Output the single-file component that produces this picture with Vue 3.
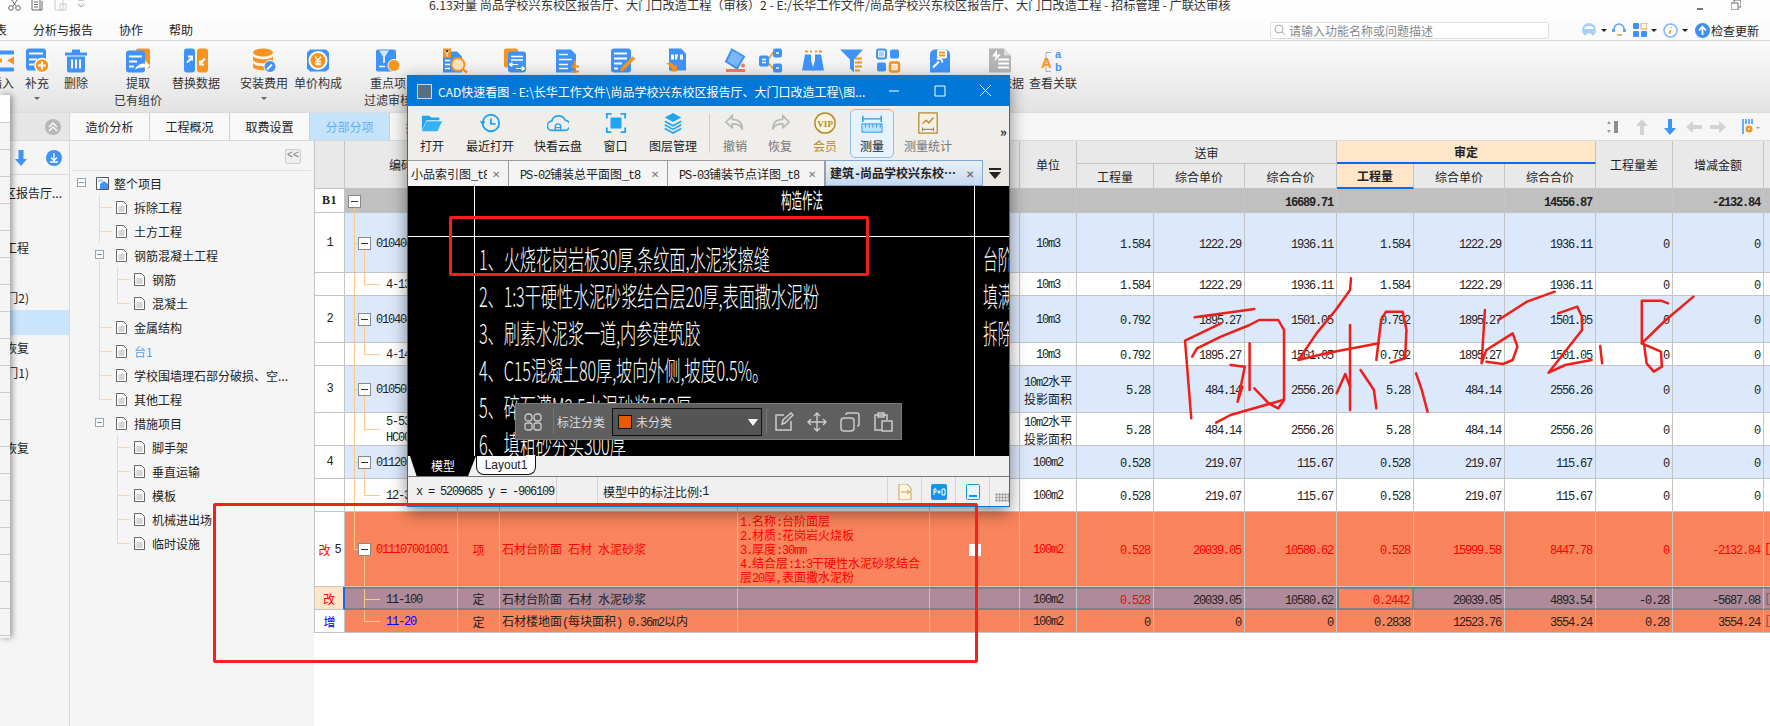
<script setup>
const B = '#3f93f7', O = '#f7941d', W = '#fff', G = '#b4b4b4'
const icons = {
  insert: `<rect x="0" y="2" width="24" height="4" rx="1" fill="${B}"/><rect x="0" y="10" width="12" height="4" fill="${O}"/><path d="M24 8v8l-7-4z" fill="${O}"/><rect x="0" y="19" width="24" height="4" rx="1" fill="${B}"/>`,
  add: `<rect x="1" y="0" width="20" height="22" rx="3" fill="${B}"/><path d="M4 5h14M4 11h8M4 16h5" stroke="${W}" stroke-width="2"/><circle cx="17" cy="17" r="7" fill="${O}" stroke="${W}" stroke-width="1.5"/><path d="M17 13v8M13 17h8" stroke="${W}" stroke-width="2"/>`,
  del: `<path d="M1 4h22v3H1zM8 1h8v3H8z" fill="${B}"/><path d="M3 8h18v14a2 2 0 0 1-2 2H5a2 2 0 0 1-2-2z" fill="${B}"/><path d="M8 11v9M12 11v9M16 11v9" stroke="${W}" stroke-width="2"/>`,
  pick: `<rect x="10" y="0" width="14" height="20" rx="2" fill="${O}"/><rect x="0" y="2" width="19" height="22" rx="3" fill="${B}"/><path d="M3 8h13M3 13h8M3 18h5" stroke="${W}" stroke-width="2"/><path d="M9 21c2-5 6-6 10-6v-3l5 5-5 5v-3c-4 0-6 0-10 2z" fill="${W}"/>`,
  swap: `<rect x="0" y="0" width="11" height="24" rx="3" fill="${B}"/><rect x="13" y="0" width="11" height="24" rx="3" fill="${O}"/><path d="M3 14l5-5M4 8h4v4M21 10l-5 5M20 16h-4v-4" stroke="${W}" stroke-width="2" fill="none"/>`,
  db: `<ellipse cx="11" cy="4" rx="10" ry="4" fill="${O}"/><path d="M1 7c0 5 20 5 20 0v4c0 5-20 5-20 0zM1 14c0 5 20 5 20 0v4c0 5-20 5-20 0z" fill="${O}"/><circle cx="18" cy="18" r="6" fill="${B}" stroke="${W}"/><path d="M15 21l5-5" stroke="${W}" stroke-width="2"/>`,
  unit: `<path d="M4 1h16l3 3v16l-3 3H4l-3-3V4z" fill="${B}"/><circle cx="12" cy="12" r="8.5" fill="${O}" stroke="${W}" stroke-width="2"/><path d="M9 8l3 4 3-4M12 12v5M9 13h6M9 15.500h6" stroke="${W}" stroke-width="1.300" fill="none"/>`,
  key: `<rect x="0" y="1" width="20" height="22" rx="2" fill="${B}"/><path d="M3 2h10l-4 6v6l-2 1V8z" fill="${W}" opacity=".8"/><circle cx="18" cy="17" r="6" fill="${O}" stroke="${W}"/><path d="M3 18h6" stroke="${W}" stroke-width="1.500"/>`,
  s1: `<path d="M0 3h14l5 5v16H0z" fill="${B}"/><rect x="0" y="0" width="8" height="9" fill="${O}"/><path d="M2 2l2 3 2-3M4 5v3" stroke="${W}"/><path d="M2 12h5M2 16h5M2 20h5" stroke="${W}" stroke-width="1.500"/><circle cx="15" cy="16" r="6.500" fill="#ffe2c2" stroke="${O}" stroke-width="2"/><path d="M20 21l4 3" stroke="${O}" stroke-width="2.500"/>`,
  s2: `<rect x="0" y="0" width="14" height="19" rx="2" fill="${O}"/><rect x="4" y="3" width="18" height="21" rx="3" fill="${B}"/><path d="M7 8h12M7 11.500h12" stroke="${W}" stroke-width="1.500"/><path d="M5 16l3-2v4zM8 16h6M21 20l-3-2v4zM18 20h-6" fill="${W}" stroke="${W}"/>`,
  s3: `<path d="M0 1h15l5 5v18H0z" fill="${B}"/><path d="M3 6h9M3 11h13M3 16h9M3 20h9" stroke="${W}" stroke-width="1.500"/><path d="M15 18h8M19 12v9M15 23h8" stroke="${O}" stroke-width="2"/>`,
  s4: `<rect x="0" y="0" width="20" height="24" rx="3" fill="${B}"/><path d="M3 5h13M3 10h13M3 15h8M3 20h4" stroke="${W}" stroke-width="1.800"/><path d="M10 22l13-13" stroke="${O}" stroke-width="3.500"/>`,
  s5: `<path d="M3 0h12l5 5v17H3z" fill="${B}"/><path d="M5 6h3v5H5zM9 6h3l-1 5H9zM14 6h3v5h-3z" fill="${W}"/><path d="M0 15c5-2 7 0 9 3l2-2v7H4l2-2c-2-3-3-5-6-6z" fill="${O}"/>`,
  s6: `<path d="M9 1l12 7-7 12L3 13z" fill="#7ab8f8" stroke="${B}" stroke-width="2"/><path d="M3 22h19" stroke="#ef7f5e" stroke-width="3"/><circle cx="20" cy="17" r="2" fill="#ef7f5e"/>`,
  s7: `<rect x="0" y="7" width="10" height="11" rx="2" fill="${B}"/><rect x="14" y="0" width="9" height="9" rx="2" fill="${B}"/><rect x="14" y="15" width="9" height="9" rx="2" fill="${B}"/><path d="M10 10l4-6M10 15l4 5" stroke="${O}" stroke-width="1.500"/><path d="M3 11h4M3 14h4M17 4.500h3M17 19.500h3" stroke="${W}" stroke-width="1.300"/>`,
  s8: `<path d="M4 6h6v6l3 10H1z" fill="${B}"/><path d="M14 6h6l3 16H11l3-10z" fill="${B}"/><path d="M4 3h3M9 3h2M14 3h2M18 3h3" stroke="${O}" stroke-width="2"/>`,
  s9: `<path d="M0 1h23l-9 10v13l-4-4v-9z" fill="${B}"/><path d="M15 10h7M15 14h7M15 18h7M15 22h5" stroke="${O}" stroke-width="2"/>`,
  s10: `<rect x="1" y="1" width="9" height="9" rx="2" fill="none" stroke="${B}" stroke-width="2"/><rect x="14" y="1" width="9" height="9" rx="2" fill="${B}"/><rect x="1" y="14" width="9" height="9" rx="2" fill="${B}"/><rect x="14" y="14" width="9" height="9" rx="2" fill="none" stroke="${O}" stroke-width="2.500"/><rect x="3" y="3" width="5" height="5" fill="#a9d0fb"/><rect x="16.500" y="16.500" width="4" height="4" fill="#ffe0b8"/>`,
  s11: `<path d="M2 6c0-3 3-5 5-5h10c2 0 5 2 5 5v18H2z" fill="${B}"/><rect x="9" y="1" width="10" height="9" rx="2" fill="${W}"/><path d="M11 4h6M11 7h6" stroke="${O}" stroke-width="1.800"/><path d="M5 19l6-6M9 11a3 3 0 0 1 5 3" stroke="${W}" stroke-width="2" fill="none"/>`,
  s12: `<path d="M1 0h15l7 7v17H1z" fill="${G}"/><path d="M16 0v7h7" fill="#ddd"/><path d="M10 11h11M10 15h11M10 19h11" stroke="${W}" stroke-width="2"/><path d="M9 1L4 8h4l-2 5 7-7h-4z" fill="${W}"/>`,
  ab: `<path d="M10 4H5v19h5" stroke="#aaa" fill="none"/><text x="0" y="19" font-size="15" font-weight="700" fill="${O}" font-family="Liberation Sans">A</text><text x="14" y="9" font-size="11" font-weight="700" fill="${B}" font-family="Liberation Sans">a</text><text x="14" y="22" font-size="11" font-weight="700" fill="${B}" font-family="Liberation Sans">b</text>`,
  open: `<path d="M1 4h8l2 2h9v3H6L1 20z" fill="#22a5f1"/><path d="M6 10h17l-5 11H1z" fill="#35b2f6"/>`,
  recent: `<circle cx="13" cy="12" r="9" fill="none" stroke="#22a5f1" stroke-width="2"/><path d="M13 7v6h5" stroke="#22a5f1" stroke-width="2" fill="none"/><path d="M1 10l3 5 3-5z" fill="#22a5f1"/>`,
  cloud: `<path d="M6 20a5 5 0 0 1-1-10 8 8 0 0 1 15-1 5.500 5.500 0 0 1-1 11z" fill="none" stroke="#22a5f1" stroke-width="1.800"/><path d="M9 20v-4a3 3 0 0 1 6 0v4M9 17h6" fill="none" stroke="#22a5f1" stroke-width="1.500"/>`,
  frame: `<rect x="6" y="6" width="12" height="12" fill="#22a5f1"/><path d="M2 7V2h5M17 2h5v5M22 17v5h-5M7 22H2v-5" stroke="#22a5f1" stroke-width="2" fill="none"/>`,
  layers: `<path d="M12 1l9 5-9 5-9-5z" fill="#22a5f1"/><path d="M3 10l9 5 9-5M3 14l9 5 9-5M3 18l9 5 9-5" stroke="#22a5f1" stroke-width="1.800" fill="none"/>`,
  undo: `<path d="M9 4L2 11l7 6v-4c6 0 9 1 11 6 0-7-4-11-11-11z" fill="none" stroke="#b8b8b8" stroke-width="1.800"/>`,
  redo: `<path d="M15 4l7 7-7 6v-4c-6 0-9 1-11 6 0-7 4-11 11-11z" fill="none" stroke="#b8b8b8" stroke-width="1.800"/>`,
  vip: `<circle cx="12" cy="12" r="11" fill="#fff4dc" stroke="#b58a2e" stroke-width="1.600"/><text x="3.500" y="16" font-size="10" font-weight="700" fill="#b58a2e" font-family="Liberation Serif">VIP</text>`,
  ruler: `<path d="M2 4v7M22 4v7M3 7.500h18" stroke="#1c9be8" stroke-width="1.600"/><rect x="1" y="13" width="22" height="9" fill="#bfe3fa" stroke="#1c9be8"/><path d="M5 13v4M9 13v4M13 13v4M17 13v4M21 13v4" stroke="#1c9be8"/>`,
  stats: `<rect x="2" y="1" width="20" height="22" fill="#f6f1e4" stroke="#b58a2e" stroke-width="1.400"/><path d="M6 13l4-4 3 3 5-6" stroke="#b58a2e" stroke-width="1.400" fill="none"/><path d="M6 19h12M6 17v4M18 17v4" stroke="#8e8e8e" stroke-width="1.300"/>`
}
const ribbon = [
  { c: 2, i: 'insert', t: '插入', caret: true }, { c: 37, i: 'add', t: '补充', caret: true }, { c: 76, i: 'del', t: '删除' },
  { c: 138, i: 'pick', t: '提取', t2: '已有组价' }, { c: 196, i: 'swap', t: '替换数据' }, { c: 264, i: 'db', t: '安装费用', caret: true },
  { c: 318, i: 'unit', t: '单价构成' }, { c: 388, i: 'key', t: '重点项', t2: '过滤审核' }, { c: 455, i: 's1', t: '' }, { c: 516, i: 's2', t: '' },
  { c: 568, i: 's3', t: '' }, { c: 623, i: 's4', t: '' }, { c: 678, i: 's5', t: '' }, { c: 735, i: 's6', t: '' }, { c: 771, i: 's7', t: '' },
  { c: 813, i: 's8', t: '' }, { c: 852, i: 's9', t: '' }, { c: 888, i: 's10', t: '' }, { c: 940, i: 's11', t: '' }, { c: 1000, i: 's12', t: '审核依据' }, { c: 1053, i: 'ab', t: '查看关联' }
].map((r, n, a) => ({ ...r, ml: n ? r.c - a[n - 1].c - 48 : r.c - 24 }))
const tree = [
  { t: '整个项目', l: 0, box: 1, root: 1 }, { t: '拆除工程', l: 1, v1: 'f' }, { t: '土方工程', l: 1, v1: 'f' },
  { t: '钢筋混凝土工程', l: 1, box: 1, v1: 'g' }, { t: '钢筋', l: 2, v1: 'f', v2: 'f' }, { t: '混凝土', l: 2, v1: 'f', v2: 'h' },
  { t: '金属结构', l: 1, v1: 'f' }, { t: '台1', l: 1, v1: 'f', blue: 1 }, { t: '学校围墙理石部分破损、空...', l: 1, v1: 'f' }, { t: '其他工程', l: 1, v1: 'h' },
  { t: '措施项目', l: 1, box: 1 }, { t: '脚手架', l: 2, v2: 'f' }, { t: '垂直运输', l: 2, v2: 'f' }, { t: '模板', l: 2, v2: 'f' }, { t: '机械进出场', l: 2, v2: 'f' }, { t: '临时设施', l: 2, v2: 'h' }
]
const leftRows = [
  { t: '校区报告厅...', first: 1 }, { t: '' }, { t: '工程' }, { t: '' }, { t: '门2)' }, { t: '', on: 1 }, { t: '恢复' }, { t: '门1)' }, { t: '' }, { t: '' }, { t: '恢复' }
]
const v = (a, b, c) => [a, b, c, a, b, c, '0', '0']
const rows = [
  { h: 24, k: 'b1', no: 'B1', box: 1, vals: ['', '', '', '16689.71', '', '', '14556.87', '', '-2132.84'] },
  { h: 60, k: 'item', no: '1', code: '010404001001', vals: ['10m3', ...v('1.584', '1222.29', '1936.11')] },
  { h: 23, k: 'sub', code: '4-13', vals: ['10m3', ...v('1.584', '1222.29', '1936.11')] },
  { h: 47, k: 'item', no: '2', code: '010404001002', vals: ['10m3', ...v('0.792', '1895.27', '1501.05')] },
  { h: 23, k: 'sub', code: '4-14', vals: ['10m3', ...v('0.792', '1895.27', '1501.05')] },
  { h: 47, k: 'item', no: '3', code: '010507004001', vals: ['10m2水平投影面积', ...v('5.28', '484.14', '2556.26')] },
  { h: 33, k: 'sub', code: '5-53', code2: 'HC001', vals: ['10m2水平投影面积', ...v('5.28', '484.14', '2556.26')] },
  { h: 33, k: 'item', no: '4', code: '011201001001', vals: ['100m2', ...v('0.528', '219.07', '115.67')] },
  { h: 33, k: 'sub', code: '12-3', vals: ['100m2', ...v('0.528', '219.07', '115.67')] },
  { h: 75, k: 'item hot', last: 1, mark: '改', no: '5', code: '011107001001', type: '项', name: '石材台阶面 石材 水泥砂浆',
    feat: ['1.名称:台阶面层', '2.材质:花岗岩火烧板', '3.厚度:30mm', '4.结合层:1:3干硬性水泥砂浆结合', '层20厚,表面撒水泥粉'], knob: 1,
    vals: ['100m2', '0.528', '20039.05', '10580.62', '0.528', '15999.58', '8447.78', '0', '-2132.84'], tail: '[' },
  { h: 23, k: 'sub sel', cont: 1, mark: '改', code: '11-100', type: '定', name: '石材台阶面 石材 水泥砂浆', red: [1, 4], tail: '[',
    vals: ['100m2', '0.528', '20039.05', '10580.62', '0.2442', '20039.05', '4893.54', '-0.28', '-5687.08'] },
  { h: 23, k: 'sub add', cont: 2, mark: '增', code: '11-20', type: '定', name: '石材楼地面(每块面积) 0.36m2以内', tail: '[',
    vals: ['100m2', '0', '0', '0', '0.2838', '12523.76', '3554.24', '0.28', '3554.24'] }
]
const seg = s => (s || '').match(/[\x00-\x7f]+|[^\x00-\x7f]+/g)?.map(t => ({ t, l: /^[\x00-\x7f]/.test(t) })) || []
const cadTools = [
  { i: 'open', t: '打开', w: 48 }, { i: 'recent', t: '最近打开', w: 68 }, { i: 'cloud', t: '快看云盘', w: 68 }, { i: 'frame', t: '窗口', w: 47 }, { i: 'layers', t: '图层管理', w: 68, sep: 1 },
  { i: 'undo', t: '撤销', w: 44, off: 1 }, { i: 'redo', t: '恢复', w: 46, off: 1 }, { i: 'vip', t: '会员', w: 44, vip: 1 }, { i: 'ruler', t: '测量', w: 44, on: 1 }, { i: 'stats', t: '测量统计', w: 68, off: 1 }
]
const cadTabs = [
  { t: '小品索引图_t8', w: 101, clip: 1 }, { t: 'PS-02铺装总平面图_t8', w: 159 }, { t: 'PS-03铺装节点详图_t8', w: 157 }, { t: '建筑-尚品学校兴东校…', w: 158, on: 1 }
]
const cadLines = ['1、火烧花岗岩板30厚,条纹面,水泥浆擦缝', '2、1:3干硬性水泥砂浆结合层20厚,表面撒水泥粉', '3、刷素水泥浆一道,内参建筑胶', '4、C15混凝土80厚,坡向外侧,坡度0.5%。', '5、碎石灌M2.5水泥砂浆150厚', '6、填粗砂夯实300厚']
const ink = [
  '365,262 490,237', '420,280 345,332 358,565', '360,380 370,355 420,320 480,285 500,270 540,270 552,300 552,510 540,535 520,520 490,475',
  '480,340 480,480', '440,405 470,410 455,515 465,470', '410,578 440,555 550,510',
  '692,145 690,180 660,240 620,310 582,390 640,370 750,340', '690,285 690,540', '745,390 755,270 765,245 800,245 808,300 805,385 775,398',
  '662,490 680,432 690,470', '712,420 740,480 745,535', '828,430 840,480 852,545',
  '1118,185 1060,215 1000,270', '972,240 965,400 975,360 1030,310 1040,350 1030,390 1010,402 975,395',
  '1125,250 1165,230 1175,260 1175,300 1105,428 1140,405 1195,390', '1213,348 1217,400',
  '1355,220 1340,212 1300,212 1300,340 1340,365 1342,410 1325,425 1310,400 1305,345', '1408,200 1350,270 1300,340'
]
</script>

<template>
  <div class="app">
    <header class="title">
      <div class="quick">
        <svg width="13" height="12" viewBox="0 0 13 12"><path d="M3 0l5 7M10 0L5 7" stroke="#666" fill="none"/><circle cx="3" cy="9" r="2.300" fill="none" stroke="#666"/><circle cx="10" cy="9" r="2.300" fill="none" stroke="#666"/></svg>
        <svg width="13" height="12" viewBox="0 0 13 12"><path d="M1 0h8v11H1zM11 2v9H9M3 3h4M3 5.500h4M3 8h4" stroke="#666" fill="none"/></svg>
        <svg class="faded" width="13" height="12" viewBox="0 0 13 12"><path d="M1 0h8v11H1zM6 5h6v6H6z" stroke="#999" fill="#fff"/></svg>
        <svg width="8" height="10" viewBox="0 0 8 10"><path d="M1 1h6M1 5l3 3 3-3" stroke="#999" fill="none"/></svg>
      </div>
      <span class="title-text">6.13对量 尚品学校兴东校区报告厅、大门口改造工程（审核）2 - E:/长华工作文件/尚品学校兴东校区报告厅、大门口改造工程 - 招标管理 - 广联达审核</span>
      <div class="win-ctl">
        <i class="min"></i>
        <svg width="10" height="10" viewBox="0 0 10 10"><path d="M3 2V0h7v7H8M0 3h7v7H0z" stroke="#666" fill="none"/></svg>
      </div>
    </header>
    <nav class="menu">
      <div class="menu-l"><span class="m0">报表</span><span>分析与报告</span><span>协作</span><span>帮助</span></div>
      <div class="menu-r">
        <div class="search">
          <svg width="11" height="12" viewBox="0 0 11 12"><circle cx="5" cy="5" r="4" fill="none" stroke="#aaa"/><path d="M8 8l3 3" stroke="#aaa"/></svg>
          <span>请输入功能名称或问题描述</span>
        </div>
        <svg class="t1" width="16" height="16" viewBox="0 0 16 16"><circle cx="8" cy="8" r="7" fill="#a9d0fb"/><path d="M3 7c1-4 9-4 10 0z" fill="#fff"/><path d="M4 15c1-5 7-5 8 0z" fill="#fff"/></svg><b class="dd"></b>
        <svg class="t2" width="16" height="16" viewBox="0 0 16 16"><path d="M3 9V7a5 5 0 0 1 10 0v2" fill="none" stroke="#5aa6f8" stroke-width="1.500"/><path d="M1 7h3v3H1zM12 7h3v3h-3z" fill="#5aa6f8"/><path d="M6 13h5" stroke="#f7941d" stroke-width="1.500"/></svg>
        <svg class="t3" width="14" height="14" viewBox="0 0 14 14"><rect width="6" height="6" rx="1" fill="#3f93f7"/><rect x="8" width="6" height="6" rx="1" fill="none" stroke="#f7941d"/><rect y="8" width="6" height="6" rx="1" fill="#3f93f7"/><rect x="8" y="8" width="6" height="6" rx="1" fill="#3f93f7"/></svg><b class="dd"></b>
        <svg class="t4" width="15" height="15" viewBox="0 0 15 15"><circle cx="7.500" cy="7.500" r="6.500" fill="#fff" stroke="#7db9f9" stroke-width="1.500"/><path d="M8 4v1M7.500 7l-1 4" stroke="#f7941d" stroke-width="1.500"/></svg><b class="dd"></b>
        <svg class="t5" width="15" height="15" viewBox="0 0 15 15"><circle cx="7.500" cy="7.500" r="7.500" fill="#3f8ef5"/><path d="M7.500 12V5M4 7.500l3.500-4 3.500 4" stroke="#fff" stroke-width="1.800" fill="none"/></svg>
        <span class="update">检查更新</span>
      </div>
    </nav>
    <section class="ribbon">
      <div v-for="r in ribbon" :key="r.c" class="rb" :style="{ marginLeft: r.ml + 'px' }">
        <svg width="24" height="25" viewBox="0 0 24 24" v-html="icons[r.i]"></svg>
        <span class="rb-t">{{ r.t }}</span>
        <span v-if="r.t2" class="rb-t">{{ r.t2 }}</span>
        <i v-if="r.caret" class="caret"></i>
      </div>
    </section>
    <section class="tabbar">
      <div class="tb-left"><span class="chev"><svg width="10" height="10" viewBox="0 0 10 10"><path d="M1 5l4-4 4 4M1 9l4-4 4 4" stroke="#fff" stroke-width="1.400" fill="none"/></svg></span></div>
      <div class="tab">造价分析</div><div class="tab">工程概况</div><div class="tab">取费设置</div><div class="tab on">分部分项</div><div class="tab">措施项目</div>
      <div class="tb-tools">
        <svg width="14" height="14" viewBox="0 0 14 14"><path d="M3 1l2 3H1zM3 13l2-3H1z" fill="#999"/><rect x="8" y="1" width="4" height="12" fill="#8e8e8e"/></svg>
        <svg width="14" height="16" viewBox="0 0 14 16"><path d="M7 0l6 7H9v9H5V7H1z" fill="#d2d2d2"/></svg>
        <svg width="14" height="16" viewBox="0 0 14 16"><path d="M7 16l6-7H9V0H5v9H1z" fill="#3f93f7"/></svg>
        <svg width="16" height="14" viewBox="0 0 16 14"><path d="M0 7l7-6v4h9v4H7v4z" fill="#d2d2d2"/></svg>
        <svg width="16" height="14" viewBox="0 0 16 14"><path d="M16 7L9 1v4H0v4h9v4z" fill="#d2d2d2"/></svg>
        <svg width="20" height="16" viewBox="0 0 20 16"><path d="M1 0v15M4 0v5M7 0v5M10 0v5" stroke="#3f93f7" stroke-width="1.500"/><circle cx="7" cy="10" r="3.500" fill="#f7941d"/><circle cx="7" cy="10" r="1" fill="#fff"/><path d="M14 8l2 2 2-2" fill="#999"/></svg>
      </div>
    </section>
    <main class="body">
      <aside class="left">
        <div class="left-tools">
          <svg width="12" height="16" viewBox="0 0 12 16"><path d="M6 16l6-7H8.500V0h-5v9H0z" fill="#3f93f7"/></svg>
          <svg width="16" height="16" viewBox="0 0 16 16"><circle cx="8" cy="8" r="8" fill="#3f93f7"/><path d="M8 3v7M5 7.500L8 10.500l3-3M4 12h8" stroke="#fff" stroke-width="1.300" fill="none"/></svg>
        </div>
        <div v-for="(r, n) in leftRows" :key="n" class="left-row" :class="{ on: r.on, first: r.first }">{{ r.t }}</div>
      </aside>
      <aside class="tree">
        <div class="tree-top"><span class="collapse">&lt;&lt;</span></div>
        <div v-for="n in tree" :key="n.t" class="node" :class="'l' + n.l">
          <i v-if="n.v1" class="v1" :class="n.v1"></i>
          <i v-if="n.v2" class="v2" :class="n.v2"></i>
          <i v-if="n.l && !n.box" class="hl"></i>
          <i v-if="n.box" class="tbox"></i>
          <svg v-if="n.root" width="13" height="13" viewBox="0 0 13 13"><path d="M.5.500h12v12H.500z" fill="#fff" stroke="#555"/><path d="M4 7l4-3 4 3v5H4z" fill="#3f93f7"/><path d="M2 2h5v3H2z" fill="#bcd9fb"/></svg>
          <svg v-else width="11" height="13" viewBox="0 0 11 13"><path d="M.5.500h7l3 3v9H.500z" fill="#fff" stroke="#666"/><path d="M2.500 6h6M2.500 8h6M2.500 10h6" stroke="#aaa"/></svg>
          <span :class="{ blue: n.blue }">{{ n.t }}</span>
        </div>
      </aside>
      <section class="table">
        <div class="thead grid">
          <div class="hc r2"></div><div class="hc r2">编码</div><div class="hc r2">类别</div><div class="hc r2">名称</div><div class="hc r2">项目特征</div><div class="hc r2"></div><div class="hc r2">单位</div>
          <div class="hc s3">送审</div><div class="hc s3 gold">审定</div>
          <div class="hc r2">工程量差</div><div class="hc r2">增减金额</div><div class="hc r2"></div>
          <div class="hc">工程量</div><div class="hc">综合单价</div><div class="hc">综合合价</div><div class="hc gold">工程量</div><div class="hc">综合单价</div><div class="hc">综合合价</div>
        </div>
        <div v-for="(r, n) in rows" :key="n" class="row grid" :class="r.k" :style="{ height: r.h + 'px' }">
          <div class="c no">
            <span v-if="r.mark" class="mark">{{ r.mark }}</span>
            <span v-if="r.no" class="l">{{ r.no }}</span>
          </div>
          <div class="c code">
            <i v-if="r.k !== 'b1' && !r.cont" class="main" :class="{ half: r.last }"></i>
            <i v-if="r.k === 'b1'" class="main low"></i>
            <template v-if="r.k === 'b1'"><i class="xbox b1box"></i></template>
            <template v-else-if="r.k.startsWith('item')">
              <i class="stub"></i><i class="xbox"></i><i class="subline"></i>
            </template>
            <template v-else>
              <i class="up" :class="{ full: r.cont === 1 }"></i><i class="rt"></i>
            </template>
            <span class="code-t"><b v-for="s in seg(r.code)" :key="s.t" class="l">{{ s.t }}</b><template v-if="r.code2"><br><b class="l">{{ r.code2 }}</b></template></span>
          </div>
          <div class="c ctr">{{ r.type }}</div>
          <div class="c txt"><div class="one"><span v-for="s in seg(r.name)" :key="s.t" :class="{ l: s.l }">{{ s.t }}</span></div></div>
          <div class="c txt feat"><div v-for="f in r.feat" :key="f" class="fl"><span v-for="s in seg(f)" :key="s.t" :class="{ l: s.l }">{{ s.t }}</span></div></div>
          <div class="c knobc"><i v-if="r.knob" class="knob"></i></div>
          <div v-for="(val, i) in r.vals" :key="i" class="c" :class="[i === 0 ? 'unit' : 'num', { red: r.red && r.red.includes(i), cur: r.k.includes('sel') && i === 4 }]">
            <div class="val"><span v-for="s in seg(val)" :key="s.t" :class="{ l: s.l }">{{ s.t }}</span></div>
          </div>
          <div class="c tail"><span class="l">{{ r.tail }}</span></div>
        </div>
      </section>
    </main>

    <div class="float">
      <div class="float-top"></div>
      <div v-for="n in 20" :key="n" class="float-row"></div>
    </div>

    <div class="cad">
      <div class="cad-title">
        <span class="cad-logo"></span>
        <span class="cad-name">CAD快速看图 - E:\长华工作文件\尚品学校兴东校区报告厅、大门口改造工程\图...</span>
        <svg width="104" height="14" viewBox="0 0 104 14"><path d="M0 7h10M46 2h10v10H46zM91 1l11 11M102 1L91 12" stroke="#fff" fill="none"/></svg>
      </div>
      <div class="cad-tools">
        <div v-for="t in cadTools" :key="t.t" class="ct" :class="{ on: t.on, off: t.off, vip: t.vip, sep: t.sep }" :style="{ width: t.w + 'px' }">
          <svg width="22" height="22" viewBox="0 0 24 24" v-html="icons[t.i]"></svg>
          <span>{{ t.t }}</span>
        </div>
        <span class="more">»</span>
      </div>
      <div class="cad-tabs">
        <div v-for="t in cadTabs" :key="t.t" class="ctab" :class="{ on: t.on, clip: t.clip }" :style="{ width: t.w + 'px' }">
          <span class="ctab-t"><span v-for="s in seg(t.t)" :key="s.t" :class="{ l: s.l }">{{ s.t }}</span></span>
          <em>✕</em>
        </div>
        <svg class="tri" width="12" height="12" viewBox="0 0 12 12"><path d="M0 1h12v2H0zM0 5h12l-6 7z" fill="#222"/></svg>
      </div>
      <div class="canvas">
        <i class="wl v a"></i><i class="wl v b"></i><i class="wl h"></i>
        <span class="cad-head">构造作法</span>
        <div class="cad-lines"><div v-for="l in cadLines" :key="l">{{ l }}</div></div>
        <div class="cad-side"><div>台阶</div><div>填满</div><div>拆除</div></div>
        <div class="anno">
          <svg width="18" height="18" viewBox="0 0 18 18"><g fill="none" stroke="#ccc" stroke-width="1.300"><rect x="1" y="1" width="7" height="7" rx="3"/><rect x="10" y="1" width="7" height="7" rx="3"/><rect x="1" y="10" width="7" height="7" rx="2"/><rect x="10" y="10" width="7" height="7" rx="2"/></g></svg>
          <i class="asep"></i>
          <span class="alabel">标注分类</span>
          <div class="adrop"><i class="swatch"></i><span>未分类</span><b></b></div>
          <i class="asep"></i>
          <svg width="20" height="20" viewBox="0 0 20 20"><path d="M10 3H2v15h15V9M8 12l1-4 8-7 2 2-8 8z" fill="none" stroke="#ccc" stroke-width="1.500"/></svg>
          <svg width="20" height="20" viewBox="0 0 20 20"><path d="M10 1v18M1 10h18M7 4l3-3 3 3M7 16l3 3 3-3M4 7l-3 3 3 3M16 7l3 3-3 3" fill="none" stroke="#ccc" stroke-width="1.400"/></svg>
          <svg width="20" height="20" viewBox="0 0 20 20"><rect x="1" y="6" width="13" height="13" rx="3" fill="none" stroke="#ccc" stroke-width="1.500"/><path d="M6 3a2 2 0 0 1 2-2h9a2 2 0 0 1 2 2v9a2 2 0 0 1-2 2" fill="none" stroke="#ccc" stroke-width="1.500"/></svg>
          <svg width="20" height="20" viewBox="0 0 20 20"><path d="M8 18H2V3h12v5M5 1h6v4H5z" fill="none" stroke="#ccc" stroke-width="1.500"/><rect x="9" y="9" width="10" height="10" fill="none" stroke="#ccc" stroke-width="1.500"/></svg>
        </div>
      </div>
      <div class="sheet"><span class="s-model">模型</span><span class="s-layout">Layout1</span></div>
      <div class="status">
        <span class="st coord l">x = 5209685 y = -906109</span>
        <span class="st gap"></span>
        <span class="st scale">模型中的标注比例:<b class="l">1</b></span>
        <span class="st ic"><svg width="14" height="16" viewBox="0 0 14 16"><path d="M1 0h8l4 4v12H1z" fill="#fff6dc" stroke="#c2a35b"/><path d="M3 8h8M9 6l3 2-3 2" stroke="#c2a35b" fill="none"/></svg></span>
        <span class="st ic"><svg width="16" height="16" viewBox="0 0 16 16"><rect width="16" height="16" rx="2" fill="#1596e4"/><path d="M3 11V5h2v3H3M8 6v4M6 8h4M11 5h3v6h-3z" stroke="#fff" fill="none"/></svg></span>
        <span class="st ic"><svg width="14" height="16" viewBox="0 0 14 16"><rect x=".5" y=".5" width="13" height="15" rx="1" fill="#eaf5fd" stroke="#1596e4"/><path d="M3 12h8" stroke="#1596e4" stroke-width="2"/></svg></span>
        <span class="grip"></span>
      </div>
    </div>

    <i class="redbox one"></i>
    <i class="redbox two"></i>
    <svg class="ink" viewBox="0 0 1568 780" preserveAspectRatio="none">
      <polyline v-for="p in ink" :key="p" :points="p" vector-effect="non-scaling-stroke" />
    </svg>
  </div>
</template>

<style>
html, body { margin: 0; background: #fff; overflow: hidden; }
</style>

<style scoped>
.app { position: relative; width: 1770px; height: 726px; overflow: hidden; display: flex; flex-direction: column; background: #fff; color: #222; font: 12px "Noto Sans CJK SC", "Liberation Sans", sans-serif; }
i, em { font-style: normal; display: block; }
b { font-weight: inherit; }
.l { font-family: "Liberation Mono", monospace; font-size: 12px; letter-spacing: -1.200px; white-space: pre; }

.title { height: 20px; flex: none; display: flex; align-items: flex-start; background: #fdfdfd; position: relative; }
.quick { position: absolute; left: 8px; top: -1px; display: flex; gap: 10px; }
.faded { opacity: .5; }
.title-text { margin-left: 429px; line-height: 10px; font-size: 12.200px; color: #333; white-space: nowrap; }
.win-ctl { position: absolute; left: 1697px; top: 0; display: flex; align-items: center; gap: 28px; }
.min { width: 6px; height: 2px; background: #777; margin-top: 8px; }
.menu { height: 20px; flex: none; display: flex; justify-content: space-between; background: #fbfbfb; border-bottom: 1px solid #d6d6d6; }
.menu-l { display: flex; gap: 26px; line-height: 20px; margin-left: -5px; }
.m0 { width: 12px; direction: rtl; overflow: hidden; white-space: nowrap; }
.menu-r { display: flex; align-items: center; height: 20px; padding-right: 11px; }
.search { width: 279px; height: 17px; box-sizing: border-box; border: 1px solid #ddd; border-radius: 3px; background: #fff; display: flex; align-items: center; gap: 4px; padding-left: 3px; color: #888; margin-right: 32px; }
.t2 { margin-left: 4px; }
.t3, .t4 { margin-left: 6px; }
.t5 { margin-left: 7px; }
.dd { width: 0; height: 0; border: 3px solid transparent; border-top: 3px solid #222; border-bottom: 0; margin-left: 4px; }
.update { margin-left: 1px; color: #222; width: 48px; white-space: nowrap; }

.ribbon { height: 72px; flex: none; display: flex; padding-top: 7px; box-sizing: border-box; background: linear-gradient(#fbfbfb, #e3e3e3); border-bottom: 1px solid #dcdcdc; white-space: nowrap; }
.rb { width: 48px; flex: none; display: flex; flex-direction: column; align-items: center; }
.rb svg { flex: none; overflow: visible; }
.rb-t { line-height: 17px; height: 17px; color: #333; }
.rb-t:nth-of-type(1) { margin-top: 1px; }
.caret { width: 0; height: 0; border: 3px solid transparent; border-top: 3px solid #666; border-bottom: 0; margin-top: 6px; }

.tabbar { height: 28px; display: flex; background: #f6f6f6; border-bottom: 1px solid #d8d8d8; box-sizing: border-box; flex: none; }
.tb-left { width: 70px; background: #e6e6e6; display: flex; justify-content: flex-end; align-items: center; padding-right: 8px; box-sizing: border-box; border-right: 1px solid #d8d8d8; }
.chev { width: 16px; height: 16px; border-radius: 50%; background: #b7b7b7; display: flex; align-items: center; justify-content: center; }
.tab { width: 80px; flex: none; box-sizing: border-box; border-right: 1px solid #cfcfcf; line-height: 27px; text-align: center; color: #222; background: #f8f8f8; }
.tab.on { background: #c5e3fb; color: #62aef6; }
.tb-tools { margin-left: auto; display: flex; align-items: center; padding-right: 8px; }
.tb-tools svg:nth-child(2) { margin-left: 15px; }
.tb-tools svg:nth-child(3) { margin-left: 14px; }
.tb-tools svg:nth-child(4) { margin-left: 9px; }
.tb-tools svg:nth-child(5) { margin-left: 8px; }
.tb-tools svg:nth-child(6) { margin-left: 16px; }

.body { flex: 1; display: flex; min-height: 0; }
.left { width: 70px; flex: none; box-sizing: border-box; background: #f5f5f5; border-right: 1px solid #d8d8d8; }
.left-tools { height: 33px; border-bottom: 1px solid #dcdcdc; display: flex; align-items: center; justify-content: flex-end; gap: 19px; padding-right: 7px; }
.left-row { height: 25px; line-height: 25px; display: flex; justify-content: flex-end; padding-right: 40px; white-space: nowrap; overflow: hidden; }
.left-row.first { height: 35px; line-height: 35px; padding-right: 7px; }
.left-row.on { background: #c9e5fd; }

.tree { width: 244px; flex: none; background: #f5f5f5; box-sizing: border-box; }
.tree-top { height: 29px; margin: 0 3px 0 2px; border-bottom: 1px solid #dedede; position: relative; }
.collapse { position: absolute; right: 10px; top: 8px; width: 14px; height: 13px; border: 1px solid #ccc; border-radius: 2px; background: #eee; color: #777; font: 10px/12px "Liberation Mono", monospace; text-align: center; }
.node { height: 24px; display: flex; align-items: center; gap: 7px; position: relative; white-space: nowrap; color: #222; }
.node.l0 { padding-left: 26px; gap: 5px; }
.node.l1 { padding-left: 46px; }
.node.l2 { padding-left: 64px; }
.blue { color: #4ea3f7; }
.tbox { position: absolute; width: 9px; height: 9px; top: 7px; left: 25px; box-sizing: border-box; border: 1px solid #8fa6b8; background: linear-gradient(#7d97aa, #7d97aa) center / 5px 1px no-repeat #fff; }
.l0 .tbox { left: 7px; }
.v1, .v2, .hl { position: absolute; background: #fdd5a5; }
.v1 { left: 29px; width: 1px; top: 0; bottom: 0; }
.v2 { left: 47px; width: 1px; top: 0; bottom: 0; }
.v1.h, .v2.h { bottom: 50%; }
.v1.g { top: 17px; }
.hl { height: 1px; top: 50%; left: 29px; width: 13px; }
.l2 .hl { left: 47px; }

.table { flex: 1; min-width: 0; background: #fff; }
.grid { display: grid; grid-template-columns: 31px 113px 42px 238px 192px 90px 57px 77px 91px 92px 77px 91px 91px 77px 91px 7px; }
.thead { grid-template-rows: 23px 25px; }
.hc { box-sizing: border-box; background: #e9e9e9; border-right: 1px solid #c4c4c4; border-bottom: 1px solid #c4c4c4; display: flex; align-items: center; justify-content: center; color: #222; }
.hc:first-child { border-left: 1px solid #c4c4c4; }
.r2 { grid-row: span 2; }
.s3 { grid-column: span 3; }
.gold { background: #ffe6c8; font-weight: 700; border-bottom: 2px solid #1168ee; }
.row { box-sizing: border-box; }
.c { box-sizing: border-box; border-right: 1px solid #c4c4c4; border-bottom: 1px solid #c4c4c4; display: flex; align-items: center; overflow: hidden; background: #fff; min-width: 0; position: relative; }
.item .c { background: #dce9fc; }
.item .no, .sub .no { background: #fff; }
.no { border-left: 1px solid #c4c4c4; justify-content: center; gap: 4px; }
.mark { font-size: 12px; }
.mark + .l { margin-top: 2px; }
.hot .mark, .sel .mark { color: #f00; }
.add .mark { color: #00f; }
.b1 .c { background: #c0c0c0; font-weight: 700; }
.b1 .no { background: #fff; font-family: "Liberation Serif", serif; }
.b1 .no .l { font-family: "Liberation Serif", serif; font-size: 12px; letter-spacing: .5px; }
.ctr { justify-content: center; }
.txt { padding-left: 2px; white-space: nowrap; }
.feat { flex-direction: column; align-items: flex-start; justify-content: center; }
.fl { height: 14px; line-height: 14px; }
.unit { justify-content: center; padding: 0 3px; }
.unit .val { width: 100%; text-align: center; line-height: 15px; }
.unit .val span { line-height: 15px; }
.num { justify-content: flex-end; padding-right: 3px; }
.tail { color: #666; }
.code { overflow: hidden; }
.code-t { position: absolute; left: 31px; top: 50%; transform: translateY(-50%); line-height: 14px; white-space: nowrap; }
.sub .code-t { left: 41px; }
.main { position: absolute; left: 9px; width: 1px; top: 0; bottom: 0; background: #fdc98a; }
.main.half { bottom: 50%; }
.main.low { top: 18px; }
.xbox { position: absolute; left: 13px; top: calc(50% - 6px); width: 13px; height: 13px; box-sizing: border-box; border: 1px solid #888; background: linear-gradient(#333, #333) center / 7px 1px no-repeat #fff; z-index: 1; }
.b1box { left: 3px; }
.stub { position: absolute; left: 9px; top: 50%; width: 5px; height: 1px; background: #fdc98a; }
.subline { position: absolute; left: 19px; top: 50%; bottom: 0; width: 1px; background: #fdc98a; }
.up { position: absolute; left: 19px; top: 0; bottom: 50%; width: 1px; background: #fdc98a; }
.up.full { bottom: 0; }
.rt { position: absolute; left: 19px; top: 50%; width: 16px; height: 1px; background: #fdc98a; }
.hot .c:not(.no), .add .c:not(.no) { background: #fa855c; }
.hot .c { color: #f00; }
.hot .no, .hot .no .l { color: #222; }
.add .code-t { color: #00f; }
.sel .c { background: #ae8a9a; border-top: 2px solid #808080; border-bottom: 2px solid #808080; }
.sel .no { background: #ffe6c8; border-top: 0; border-bottom: 1px solid #c4c4c4; border-right: 2px solid #1168ee; }
.sel .cur { background: #fa855c; border: 2px solid #808080; color: #f00; }
.sel .red { color: #f00; }
.knob { position: absolute; left: 39px; top: 32px; width: 12px; height: 12px; background: linear-gradient(90deg, #fff 8px, #999 8px, #999 9px, #fff 9px); }

.float { position: absolute; left: 0; top: 95px; width: 10px; height: 543px; background: #f5f5f5; box-shadow: 2px 0 6px rgba(0, 0, 0, .4); overflow: hidden; z-index: 3; }
.float-top { height: 27px; background: #fdfdfd; border-bottom: 1px solid #ccc; }
.float-row { height: 26px; border-bottom: 1px solid #ccc; }

.cad { position: absolute; left: 407px; top: 75px; width: 603px; height: 432px; box-sizing: border-box; border: 1px solid #0078d7; display: flex; flex-direction: column; background: #f0f0f0; box-shadow: 0 6px 16px rgba(0, 0, 0, .45); z-index: 4; }
.cad-title { height: 30px; flex: none; background: #0078d7; color: #fff; display: flex; align-items: center; padding-left: 9px; white-space: nowrap; }
.cad-logo { width: 15px; height: 15px; background: #5a6e80; border: 1px solid #cbd8e2; box-sizing: border-box; margin-right: 6px; flex: none; }
.cad-name { font-size: 12px; width: 451px; flex: none; }
.cad-tools { height: 54px; flex: none; background: #efeeea; display: flex; align-items: center; position: relative; }
.ct { flex: none; height: 49px; display: flex; flex-direction: column; align-items: center; justify-content: center; gap: 3px; box-sizing: border-box; white-space: nowrap; color: #222; border: 1px solid transparent; font-size: 12px; }
.ct.sep { margin-right: 6px; position: relative; }
.ct.sep::after { content: ""; position: absolute; right: -4px; top: 4px; bottom: 4px; width: 1px; background: #ccc; }
.ct.off { color: #777; }
.ct.vip { color: #b58a2e; }
.ct.on { background: #e8f2fc; border: 1px solid #90bdf0; border-radius: 5px; margin-left: 3px; }
.more { position: absolute; right: 2px; top: 16px; font-size: 13px; font-weight: 700; }
.cad-tabs { height: 26px; flex: none; background: #ece9e4; display: flex; align-items: stretch; position: relative; }
.ctab { box-sizing: border-box; flex: none; border: 1px solid #9a9a9a; border-bottom: 0; border-left: 0; background: #f4f4f4; display: flex; align-items: center; justify-content: space-between; padding: 0 8px 0 11px; white-space: nowrap; overflow: hidden; }
.ctab.clip { padding-left: 3px; }
.ctab.clip .ctab-t { width: 76px; overflow: hidden; }
.ctab em { font-size: 10px; color: #777; flex: none; }
.ctab.on { background: linear-gradient(#eaf1f9, #c4d8ee); border: 1px solid #7fa8d8; font-weight: 700; padding-left: 4px; }
.tri { position: absolute; right: 8px; top: 7px; }
.canvas { flex: 1; min-height: 0; background: #000; position: relative; overflow: hidden; color: #fff; }
.wl { position: absolute; background: #fff; }
.wl.v { top: 0; bottom: 0; width: 1px; }
.wl.a { left: 66px; }
.wl.b { left: 566px; }
.wl.h { left: 0; right: 0; height: 1px; top: 50px; }
.cad-head { position: absolute; left: 373px; top: 0; font-size: 21px; line-height: 26px; transform: scaleX(.5); transform-origin: left; white-space: nowrap; }
.cad-lines { position: absolute; left: 71px; top: 54px; line-height: 37px; font-size: 27px; font-weight: 300; white-space: nowrap; transform: scaleX(.6); transform-origin: left; letter-spacing: -.2px; }
.cad-side { position: absolute; left: 575px; top: 54px; line-height: 37px; font-size: 27px; font-weight: 300; white-space: nowrap; transform: scaleX(.55); transform-origin: left; }
.anno { position: absolute; left: 107px; top: 217px; width: 387px; height: 37px; box-sizing: border-box; background: #5f5f5f; border: 1px solid #7b7b7b; display: flex; align-items: center; padding-left: 8px; color: #ddd; }
.asep { width: 1px; height: 25px; background: #777; margin-left: 11px; margin-right: 3px; flex: none; }
.alabel { width: 55px; flex: none; }
.adrop { width: 150px; height: 28px; flex: none; box-sizing: border-box; border: 1px solid #111; background: #555; display: flex; align-items: center; padding-left: 5px; margin-right: -7px; position: relative; }
.swatch { width: 14px; height: 14px; box-sizing: border-box; background: #e85a00; border: 1px solid #111; margin-right: 4px; }
.adrop b { position: absolute; right: 3px; top: 10px; border: 5px solid transparent; border-top: 7px solid #fff; border-bottom: 0; }
.anno > svg { margin-left: 13px; flex: none; }
.anno > svg:first-child { margin-left: 0; }
.anno > .asep + svg { margin-left: 4px; }
.sheet { height: 21px; flex: none; background: #f0f0f0; display: flex; border-bottom: 1px solid #777; box-sizing: border-box; }
.s-model { width: 66px; margin-left: 2px; background: #000; color: #fff; text-align: center; line-height: 19px; clip-path: polygon(0 0, 100% 0, 88% 100%, 10% 100%); flex: none; }
.s-layout { width: 60px; background: #fff; border: 1px solid #111; border-top: 0; border-radius: 0 0 8px 8px; text-align: center; line-height: 18px; height: 19px; box-sizing: border-box; font-family: "Liberation Sans", sans-serif; font-size: 12px; letter-spacing: 0; }
.status { height: 29px; flex: none; display: flex; align-items: center; background: #f0f0f0; }
.st { height: 100%; display: flex; align-items: center; border-right: 1px solid #d4d4d4; box-sizing: border-box; flex: none; }
.coord { width: 149px; padding-left: 8px; }
.gap { width: 41px; }
.scale { width: 290px; padding-left: 5px; }
.ic { width: 34px; justify-content: center; }
.grip { width: 14px; height: 9px; margin: 12px 0 0 auto; background: radial-gradient(#aaa 1px, transparent 1.500px) 0 0 / 3px 3px; }

.redbox { position: absolute; border: 3px solid #f3211a; border-radius: 2px; box-sizing: border-box; z-index: 5; }
.redbox.one { left: 449px; top: 216px; width: 420px; height: 60px; }
.redbox.two { left: 213px; top: 503px; width: 765px; height: 160px; }
.ink { position: absolute; left: 1020px; top: 230px; width: 750px; height: 260px; z-index: 5; }
.ink polyline { fill: none; stroke: #f01e18; stroke-width: 2.500; stroke-linejoin: round; stroke-linecap: round; }
</style>
